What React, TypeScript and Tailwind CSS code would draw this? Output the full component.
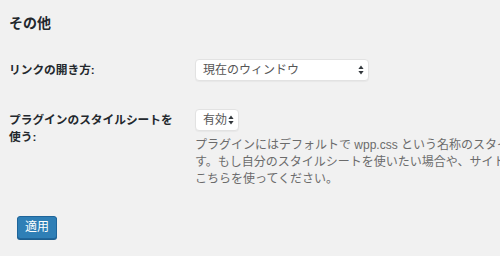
const FONT = "font-['Liberation_Sans','Noto_Sans_CJK_JP',sans-serif]";

function UpDown() {
  return (
    <svg width="6" height="10" viewBox="0 0 6 10" className="shrink-0">
      <path d="M3 0.5 L5.6 4 H0.4 Z" fill="#32373c" />
      <path d="M3 9.5 L5.6 6 H0.4 Z" fill="#32373c" />
    </svg>
  );
}

function FakeSelect({ label, width }: { label: string; width: string }) {
  return (
    <div
      className={`${width} h-[22px] flex items-center justify-between pl-[7px] pr-[4px] bg-white border border-[#e2e2e2] rounded-[4px] shadow-[0_1px_1px_rgba(0,0,0,0.04)] text-[12px] leading-none text-[#555]`}
    >
      <span>{label}</span>
      <UpDown />
    </div>
  );
}

export default function App() {
  return (
    <div className={`w-[500px] h-[256px] overflow-hidden bg-[#f1f1f1] text-[#23282d] ${FONT}`}>
      {/* Heading */}
      <h2 className="pl-[9px] pt-[13px] text-[14px] leading-[20px] font-bold">その他</h2>

      {/* Link target */}
      <div className="flex items-center mt-[26px] pl-[9px]">
        <div className="w-[186px] shrink-0 text-[11.7px] font-bold">リンクの開き方:</div>
        <FakeSelect label="現在のウィンドウ" width="w-[174px]" />
      </div>

      {/* Stylesheet */}
      <div className="flex mt-[28px] pl-[9px]">
        <div className="w-[186px] shrink-0 pt-[2px] text-[11.7px] leading-[17px] font-bold">
          プラグインのスタイルシートを
          <br />
          使う:
        </div>
        <div className="shrink-0">
          <FakeSelect label="有効" width="w-[44px]" />
          <p className="mt-[6px] text-[12px] leading-[17px] text-[#6b6b6b] whitespace-nowrap">
            プラグインにはデフォルトで wpp.css という名称のスタイルシートが読み込まれていま
            <br />
            す。もし自分のスタイルシートを使いたい場合や、サイトのテーマで設定する場合は
            <br />
            こちらを使ってください。
          </p>
        </div>
      </div>

      {/* Submit */}
      <div className="pl-[17px] mt-[26px]">
        <button className="w-[40px] h-[23px] rounded-[3px] bg-[#2f7fb6] border border-[#1f659a] shadow-[0_1px_0_#1f5f8f] text-white text-[12px] leading-none">
          適用
        </button>
      </div>
    </div>
  );
}
